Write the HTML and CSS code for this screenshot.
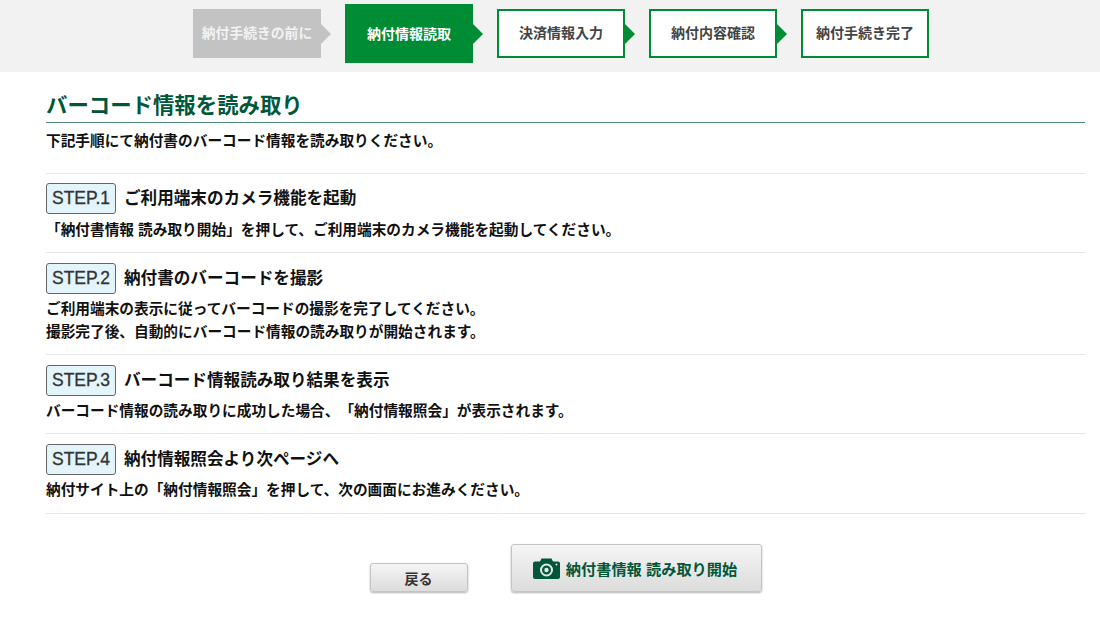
FILE: index.html
```html
<!DOCTYPE html>
<html lang="ja">
<head>
<meta charset="utf-8">
<title>バーコード情報を読み取り</title>
<link rel="stylesheet" href="styles.css">
</head>
<body>
<header class="progress">
  <ol class="progress-list">
    <li class="stage stage-done">納付手続きの前に</li>
    <li class="stage stage-current">納付情報読取</li>
    <li class="stage">決済情報入力</li>
    <li class="stage">納付内容確認</li>
    <li class="stage stage-last">納付手続き完了</li>
  </ol>
</header>
<main class="content">
  <h1 class="title">バーコード情報を読み取り</h1>
  <p class="intro">下記手順にて納付書のバーコード情報を読み取りください。</p>
  <section class="step">
    <h2 class="step-head"><span class="badge">STEP.1</span>ご利用端末のカメラ機能を起動</h2>
    <p class="step-text">「納付書情報 読み取り開始」を押して、ご利用端末のカメラ機能を起動してください。</p>
  </section>
  <section class="step">
    <h2 class="step-head"><span class="badge">STEP.2</span>納付書のバーコードを撮影</h2>
    <p class="step-text">ご利用端末の表示に従ってバーコードの撮影を完了してください。<br>撮影完了後、自動的にバーコード情報の読み取りが開始されます。</p>
  </section>
  <section class="step">
    <h2 class="step-head"><span class="badge">STEP.3</span>バーコード情報読み取り結果を表示</h2>
    <p class="step-text">バーコード情報の読み取りに成功した場合、「納付情報照会」が表示されます。</p>
  </section>
  <section class="step">
    <h2 class="step-head"><span class="badge">STEP.4</span>納付情報照会より次ページへ</h2>
    <p class="step-text">納付サイト上の「納付情報照会」を押して、次の画面にお進みください。</p>
  </section>
  <div class="actions">
    <button class="btn btn-back" type="button">戻る</button>
    <button class="btn btn-start" type="button">
      <svg class="camera" viewBox="0 0 27 21" width="27" height="21" aria-hidden="true">
        <path fill="#00573a" fill-rule="evenodd" d="M2 3.500h5l1.500-3h10l1.500 3h5a2 2 0 0 1 2 2V19a2 2 0 0 1-2 2H2a2 2 0 0 1-2-2V5.500a2 2 0 0 1 2-2zM13.500 5.500a6.500 6.500 0 1 0 0 13 6.500 6.500 0 0 0 0-13zM13.500 7.500a4.500 4.500 0 1 1 0 9 4.500 4.500 0 0 1 0-9zM13.500 9.800a2.200 2.200 0 1 0 0 4.400 2.200 2.200 0 0 0 0-4.400zM23.500 5.500a1 1 0 1 0 0 2 1 1 0 0 0 0-2z"/>
      </svg>
      納付書情報 読み取り開始
    </button>
  </div>
</main>
</body>
</html>
```

FILE: styles.css
```css
* { box-sizing: border-box; }
html, body { margin: 0; padding: 0; }
body {
  background: #fff;
  color: #111;
  font-family: "Liberation Sans", "Noto Sans CJK JP", sans-serif;
  font-weight: 700;
  height: 626px;
  overflow: hidden;
  text-spacing-trim: space-all;
}
.progress { background: #f2f2f2; height: 72px; }
.progress-list {
  list-style: none;
  margin: 0;
  padding: 9px 0 0 193px;
  display: flex;
  gap: 24px;
  align-items: flex-start;
}
.stage {
  position: relative;
  width: 128px;
  height: 49px;
  background: #fff;
  border: 2px solid #008c35;
  color: #444;
  font-size: 14px;
  line-height: 45px;
  text-align: center;
  white-space: nowrap;
}
.stage::after {
  content: "";
  position: absolute;
  left: 100%;
  top: 50%;
  margin-top: -10px;
  margin-left: 2px;
  border-left: 10px solid #008c35;
  border-top: 10px solid transparent;
  border-bottom: 10px solid transparent;
}
.stage-done {
  background: #c3c3c3;
  border-color: #c3c3c3;
  color: #f2f2f2;
  font-size: 13.800px;
}
.stage-done::after { border-left-color: #c3c3c3; }
.stage-current {
  background: #008c35;
  border-color: #008c35;
  color: #fff;
  height: 59px;
  margin-top: -5px;
  line-height: 57px;
}
.stage-last::after { display: none; }
.content { margin: 0 15px 0 46px; padding-top: 18px; }
.title {
  margin: 0;
  color: #00573a;
  font-size: 21.400px;
  line-height: 32px;
  border-bottom: 1px solid #4f8a76;
}
.intro {
  margin: 0;
  padding-top: 7px;
  height: 50px;
  font-size: 14.680px;
  line-height: 22px;
}
.step { border-top: 1px solid #e6e6e6; padding-top: 10px; height: 79px; }
.step:first-of-type { padding-top: 9px; }
.step:nth-of-type(2) { height: 102px; }
.step:nth-of-type(4) { border-bottom: 1px solid #e6e6e6; height: 81px; }
.step-head {
  margin: 0;
  display: flex;
  align-items: center;
  font-size: 16.600px;
  line-height: 31px;
  height: 31px;
}
.badge {
  width: 70px;
  height: 31px;
  margin-right: 8px;
  background: #e3f4fb;
  border: 1px solid #666;
  border-radius: 3px;
  color: #333;
  font-size: 17.500px;
  font-weight: 400;
  -webkit-text-stroke: 0.3px #333;
  line-height: 29px;
  text-align: center;
}
.step-text {
  margin: 4px 0 0;
  font-size: 14.680px;
  line-height: 23px;
}
.step:first-of-type .step-text { margin-top: 5px; }
.actions {
  display: flex;
  align-items: flex-end;
  padding: 30px 0 0 324px;
  gap: 43px;
}
.btn {
  font-family: inherit;
  font-weight: 700;
  border: 1px solid #c4c4c4;
  border-radius: 3px;
  background: linear-gradient(#f5f5f5, #dcdcdc);
  box-shadow: 0 1px 2px rgba(0, 0, 0, 0.3);
  padding: 0;
  display: flex;
  align-items: center;
  justify-content: center;
}
.btn-back {
  width: 98px;
  height: 29px;
  color: #333;
  font-size: 14px;
  padding-right: 1px;
}
.btn-start {
  width: 251px;
  height: 48px;
  color: #00573a;
  font-size: 15.200px;
  gap: 6px;
  padding-right: 3px;
}
.camera { flex: none; }
```
